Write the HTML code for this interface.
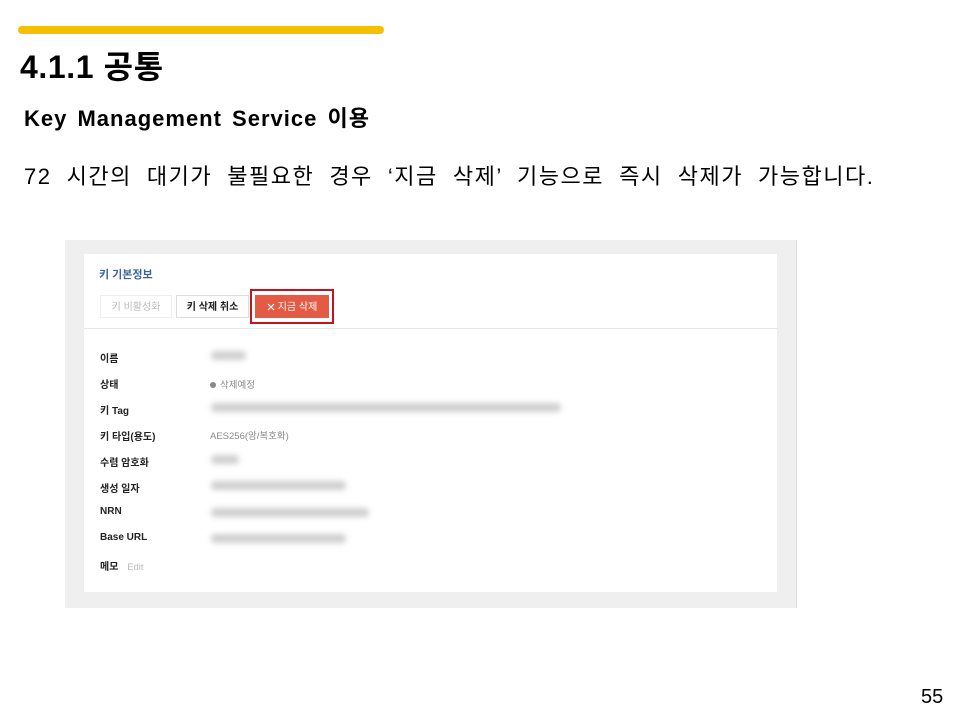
<!DOCTYPE html>
<html><head><meta charset="utf-8">
<style>
body{margin:0;width:960px;height:720px;background:#fff;position:relative;overflow:hidden;font-family:"Liberation Sans","Noto Sans CJK KR",sans-serif;color:#000}
.bar{position:absolute;left:18px;top:26px;width:366px;height:8px;background:#f5c000;border-radius:4px}
h1{position:absolute;left:20px;top:42px;margin:0;font-size:32px;font-weight:bold;letter-spacing:0.6px}
h2{position:absolute;left:24px;top:101px;margin:0;font-size:22px;font-weight:bold;letter-spacing:1px;word-spacing:3px}
.p{position:absolute;left:24px;top:159px;font-size:22px;white-space:nowrap;letter-spacing:1.5px;word-spacing:7.5px}
.shot{position:absolute;left:65px;top:240px;width:731px;height:368px;background:#efefef;border-right:1px solid #ddd}
.card{position:absolute;left:19px;top:14px;width:693px;height:338px;background:#fff}
.t{position:absolute;left:15px;top:12px;font-size:11px;font-weight:bold;color:#3a64a0}
.btn{position:absolute;top:41px;height:23px;font-size:10px;line-height:23px;text-align:center;border:1px solid #ddd;box-sizing:border-box}
.div{position:absolute;left:0;top:74px;width:693px;height:1px;background:#e6e6e6}
.lab{position:absolute;left:16px;font-size:10px;font-weight:bold;color:#222}
.val{position:absolute;left:126px;font-size:9.5px;color:#888}
.blur{position:absolute;left:127px;height:9px;background:#cfcfcf;filter:blur(3px);border-radius:4px}
.pg{position:absolute;left:921px;top:686px;font-size:20px}
</style></head><body>
<div class="bar"></div>
<h1>4.1.1 공통</h1>
<h2>Key Management Service 이용</h2>
<div class="p">72 시간의 대기가 불필요한 경우 ‘지금 삭제’ 기능으로 즉시 삭제가 가능합니다.</div>
<div class="shot"><div class="card">
<div class="t">키 기본정보</div>
<div class="btn" style="left:16px;width:72px;color:#bbb;border-color:#eee">키 비활성화</div>
<div class="btn" style="left:92px;width:73px;font-weight:bold;color:#222">키 삭제 취소</div>
<div style="position:absolute;left:166px;top:35px;width:84px;height:35px;border:2px solid #c0151e;box-sizing:border-box"></div>
<div class="btn" style="left:171px;top:41px;width:74px;background:#e35a45;border-color:#e35a45;color:#fff"><svg width="8" height="8" viewBox="0 0 8 8" style="margin-right:3px;vertical-align:-1px"><path d="M1 1L7 7M7 1L1 7" stroke="#fff" stroke-width="1.2"/></svg>지금 삭제</div>
<div class="div"></div>
<div class="lab" style="top:96px">이름</div><div class="blur" style="top:97px;width:35px"></div>
<div class="lab" style="top:122px">상태</div><div class="val" style="top:123px"><span style="display:inline-block;width:6px;height:6px;border-radius:3px;background:#888;margin-right:4px"></span>삭제예정</div>
<div class="lab" style="top:148px">키 Tag</div><div class="blur" style="top:149px;width:350px"></div>
<div class="lab" style="top:174px">키 타입(용도)</div><div class="val" style="top:174px">AES256(암/복호화)</div>
<div class="lab" style="top:200px">수렴 암호화</div><div class="blur" style="top:201px;width:28px"></div>
<div class="lab" style="top:226px">생성 일자</div><div class="blur" style="top:227px;width:135px"></div>
<div class="lab" style="top:252px">NRN</div><div class="blur" style="top:254px;width:158px"></div>
<div class="lab" style="top:278px">Base URL</div><div class="blur" style="top:280px;width:135px"></div>
<div class="lab" style="top:304px">메모 <span style="font-weight:normal;color:#bbb;margin-left:6px;font-size:9.5px">Edit</span></div>
</div></div>
<div class="pg">55</div>
</body></html>
